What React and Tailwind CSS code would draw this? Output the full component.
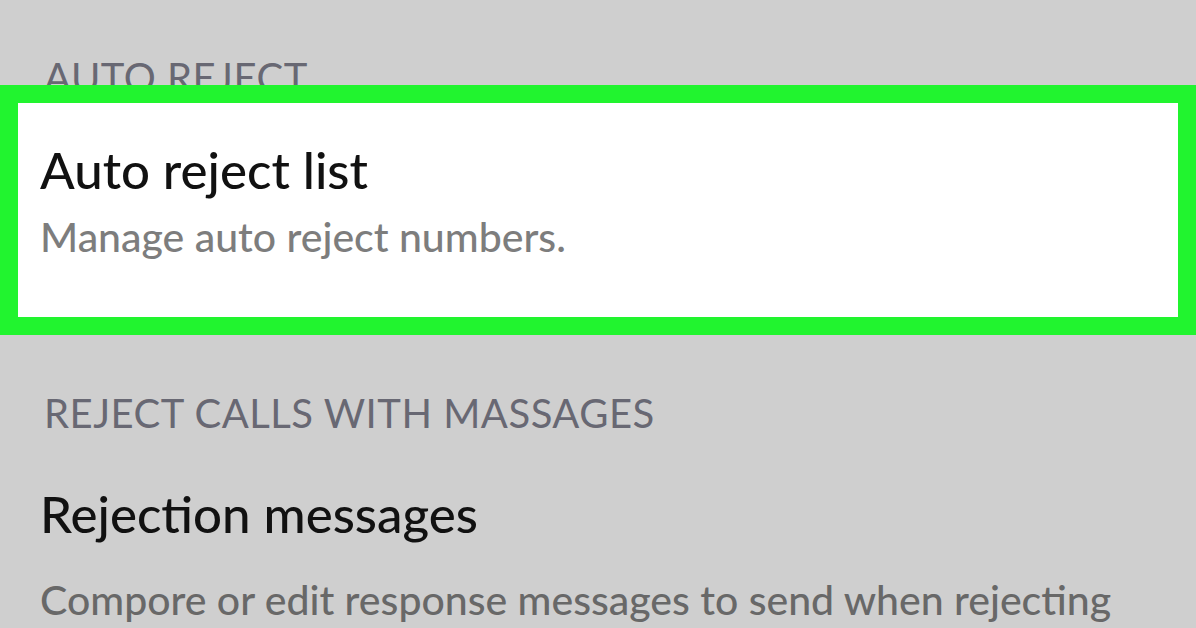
const SectionHeader = ({ children, className = "" }) => (
  <div className={`pl-[44px] text-[40px] leading-none tracking-[0.5px] text-[#686873] ${className}`}>
    {children}
  </div>
);

const SettingItem = ({ title, description, descClass = "text-[#7d7d7d]", gap = "mt-[22px]", className = "" }) => (
  <div className={className}>
    <div className="text-[51px] font-medium leading-none text-[#111111]">{title}</div>
    <div className={`${gap} text-[41px] font-medium leading-none ${descClass}`}>{description}</div>
  </div>
);

export default function App() {
  return (
    <div
      className="relative h-[628px] w-full overflow-hidden bg-[#cfcfcf]"
      style={{ fontFamily: "Lato, 'Open Sans', sans-serif" }}
    >
      <div className="flex h-[85px] items-end">
        <SectionHeader className="translate-y-[12px]">AUTO REJECT</SectionHeader>
      </div>

      <section className="relative z-10 h-[250px] border-[18px] border-[#21f42f] bg-white">
        <SettingItem
          className="pl-[22px] pt-[41px]"
          gap="mt-[21px]"
          title="Auto reject list"
          description="Manage auto reject numbers."
        />
      </section>

      <SectionHeader className="mt-[58px]">REJECT CALLS WITH MASSAGES</SectionHeader>

      <SettingItem
        className="mt-[55px] pl-[40px]"
        gap="mt-[40px]"
        title="Rejection messages"
        description="Compore or edit response messages to send when rejecting"
        descClass="text-[#686868]"
      />
    </div>
  );
}
